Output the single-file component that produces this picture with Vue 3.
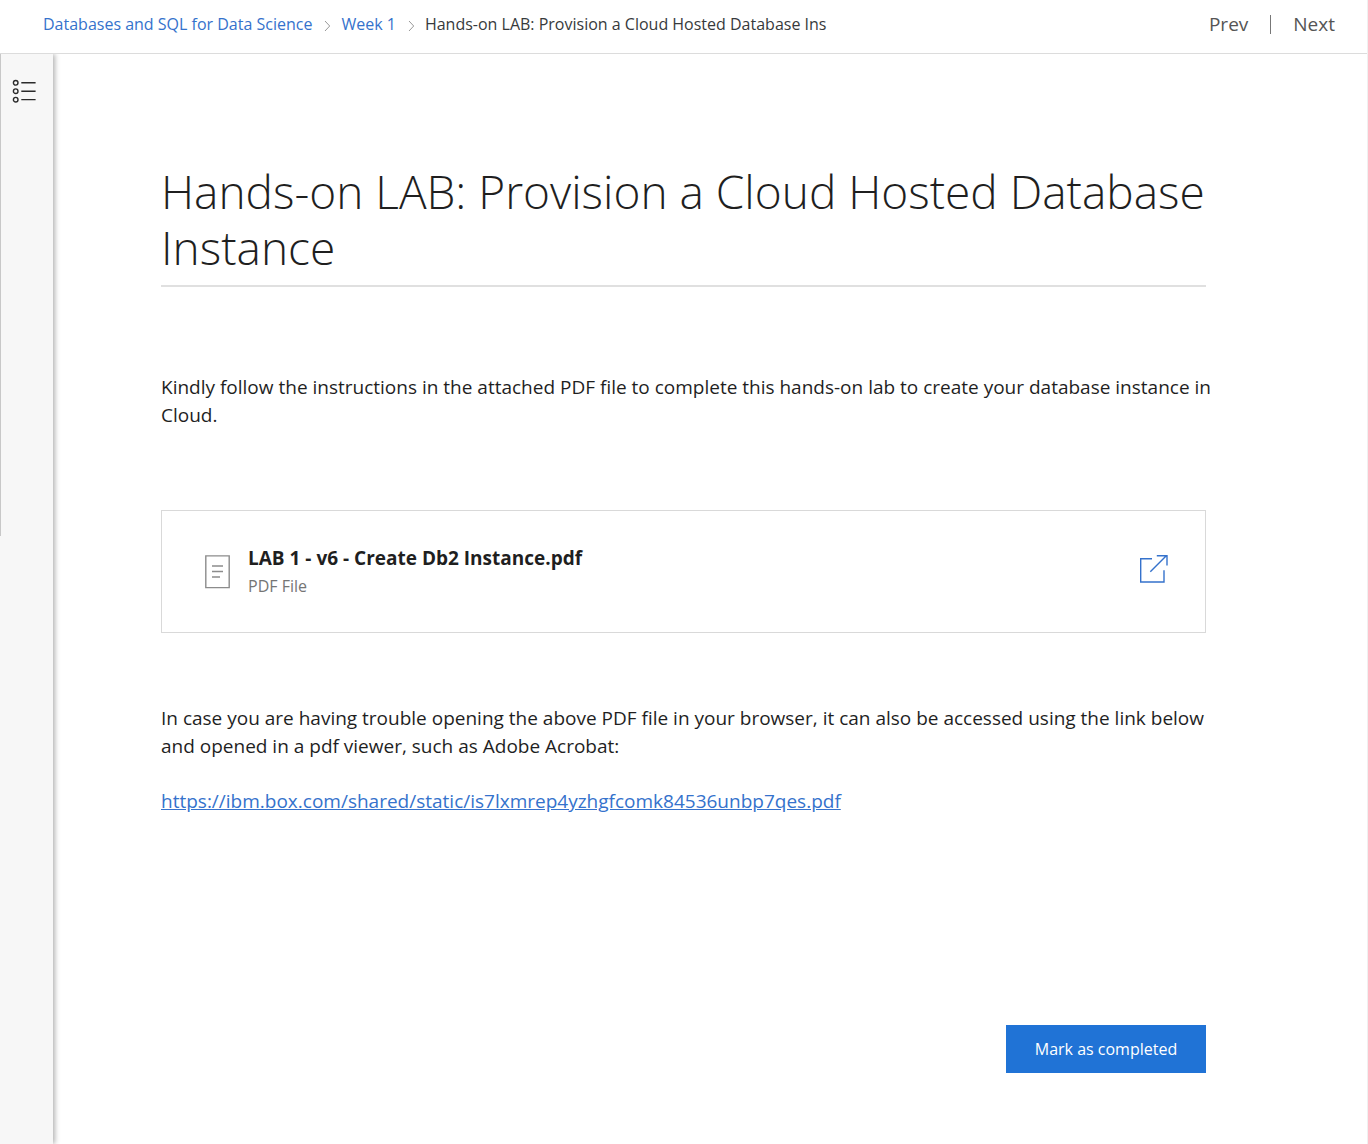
<script setup>
const crumbs = [
  { label: 'Databases and SQL for Data Science' },
  { label: 'Week 1' }
]
const fileUrl = 'https://ibm.box.com/shared/static/is7lxmrep4yzhgfcomk84536unbp7qes.pdf'
</script>

<template>
  <div class="page">
    <header class="topbar">
      <nav class="crumbs" aria-label="Breadcrumb">
        <template v-for="crumb in crumbs" :key="crumb.label">
          <a href="#">{{ crumb.label }}</a>
          <svg class="chevron" width="7" height="12" viewBox="0 0 7 12" aria-hidden="true">
            <path d="M1 1l4.700 5L1 11" />
          </svg>
        </template>
        <span class="current">Hands-on LAB: Provision a Cloud Hosted Database Ins</span>
      </nav>
      <nav class="pager" aria-label="Lesson navigation">
        <a href="#">Prev</a>
        <span class="divider"></span>
        <a href="#">Next</a>
      </nav>
    </header>

    <div class="body">
      <aside class="rail">
        <button class="toc" type="button" aria-label="Course outline">
          <svg width="24" height="24" viewBox="0 0 24 24" aria-hidden="true">
            <g fill="none" stroke="#2b2b2b" stroke-width="1.400">
              <circle cx="3.700" cy="3.800" r="2.300" />
              <circle cx="3.700" cy="12.200" r="2.300" />
              <circle cx="3.700" cy="20.700" r="2.300" />
              <path d="M9.300 3.700H23.600M9.300 12.200H23.600M9.300 20.600H23.600" />
            </g>
          </svg>
        </button>
      </aside>

      <main class="content">
        <h1>Hands-on LAB: Provision a Cloud Hosted Database Instance</h1>
        <p class="intro">
          Kindly follow the instructions in the attached PDF file to complete this hands-on lab to create your database instance in Cloud.
        </p>
        <a class="file" href="#">
          <svg width="26" height="34" viewBox="0 0 26 34" aria-hidden="true">
            <g fill="none" stroke="#8c8c8c" stroke-width="1.400">
              <path d="M.8 .9H24.200V32.600H.8ZM7 11H18M7 16.500H18M7 22H15" />
            </g>
          </svg>
          <span class="file-text">
            <strong>LAB 1 - v6 - Create Db2 Instance.pdf</strong>
            <span class="kind">PDF File</span>
          </span>
          <svg class="open" width="29" height="29" viewBox="0 0 29 29" aria-hidden="true">
            <path d="M13 3.700H1.700V27H25V15.200M11.300 16.700L27.300 .7M17.800 .8H28V10.500" />
          </svg>
        </a>
        <p class="note">
          In case you are having trouble opening the above PDF file in your browser, it can also be accessed using the link below and opened in a pdf viewer, such as Adobe Acrobat:
        </p>
        <p class="link"><a href="#">{{ fileUrl }}</a></p>
        <div class="actions">
          <button class="complete" type="button">Mark as completed</button>
        </div>
      </main>
    </div>
  </div>
</template>

<style>
body {
  margin: 0;
  background: #fff;
}
</style>

<style scoped>
.page {
  box-sizing: border-box;
  display: flex;
  flex-direction: column;
  min-height: 100vh;
  border-right: 1px solid #f0f0f0;
  font-family: "Open Sans", sans-serif;
  font-size: 19px;
  line-height: 28px;
  color: #1f1f1f;
}
a {
  color: #3572cc;
  text-decoration: none;
}
.topbar {
  display: flex;
  justify-content: space-between;
  align-items: center;
  height: 48px;
  padding: 0 32px 5px 43px;
  border-bottom: 1px solid #dcdcdc;
}
.crumbs {
  display: flex;
  align-items: center;
  font-size: 16px;
  white-space: nowrap;
}
.chevron {
  flex: none;
  margin: 4px 10px 0 12px;
  fill: none;
  stroke: #999;
}
.current {
  color: #373a3c;
}
.pager {
  display: flex;
  align-items: center;
  gap: 22px;
}
.pager a {
  color: #555;
}
.divider {
  width: 1px;
  height: 19px;
  background: #777;
}
.body {
  flex: 1;
  display: flex;
}
.rail {
  flex: none;
  width: 53px;
  background: linear-gradient(#c8c8c8, #c8c8c8) 0 0 / 1px 482px no-repeat #f7f7f7;
  box-shadow: 2px 0 5px rgba(0, 0, 0, 0.3);
  clip-path: inset(0 -10px 0 0);
}
.toc {
  display: block;
  margin: 25px 0 0 12px;
  padding: 0;
  border: 0;
  background: none;
}
.toc svg {
  display: block;
}
.content {
  flex: 1;
  min-width: 0;
  padding: 109px 161px 70px 108px;
}
h1 {
  margin: 0;
  padding-bottom: 10px;
  border-bottom: 2px solid #e0e0e0;
  font-size: 46px;
  line-height: 56px;
  font-weight: 300;
}
p {
  margin: 0 -8px 0 0;
}
.intro {
  margin-top: 86px;
}
.file {
  display: flex;
  align-items: center;
  margin-top: 81px;
  padding: 33px 37px 32px 43px;
  border: 1px solid #d9d9d9;
  color: #1f1f1f;
}
.file-text {
  display: flex;
  flex-direction: column;
  margin-left: 17px;
}
.kind {
  font-size: 16px;
  color: #757575;
}
.open {
  margin: 0 0 6px auto;
  fill: none;
  stroke: #3572cc;
  stroke-width: 1.400px;
}
.note {
  margin-top: 71px;
}
.link {
  margin-top: 27px;
}
.link a {
  text-decoration: underline;
}
.actions {
  display: flex;
  justify-content: flex-end;
  margin-top: 210px;
}
.complete {
  width: 200px;
  height: 48px;
  padding: 0;
  border: 0;
  background: #2073d6;
  color: #fff;
  font-family: inherit;
  font-size: 16px;
}
</style>
